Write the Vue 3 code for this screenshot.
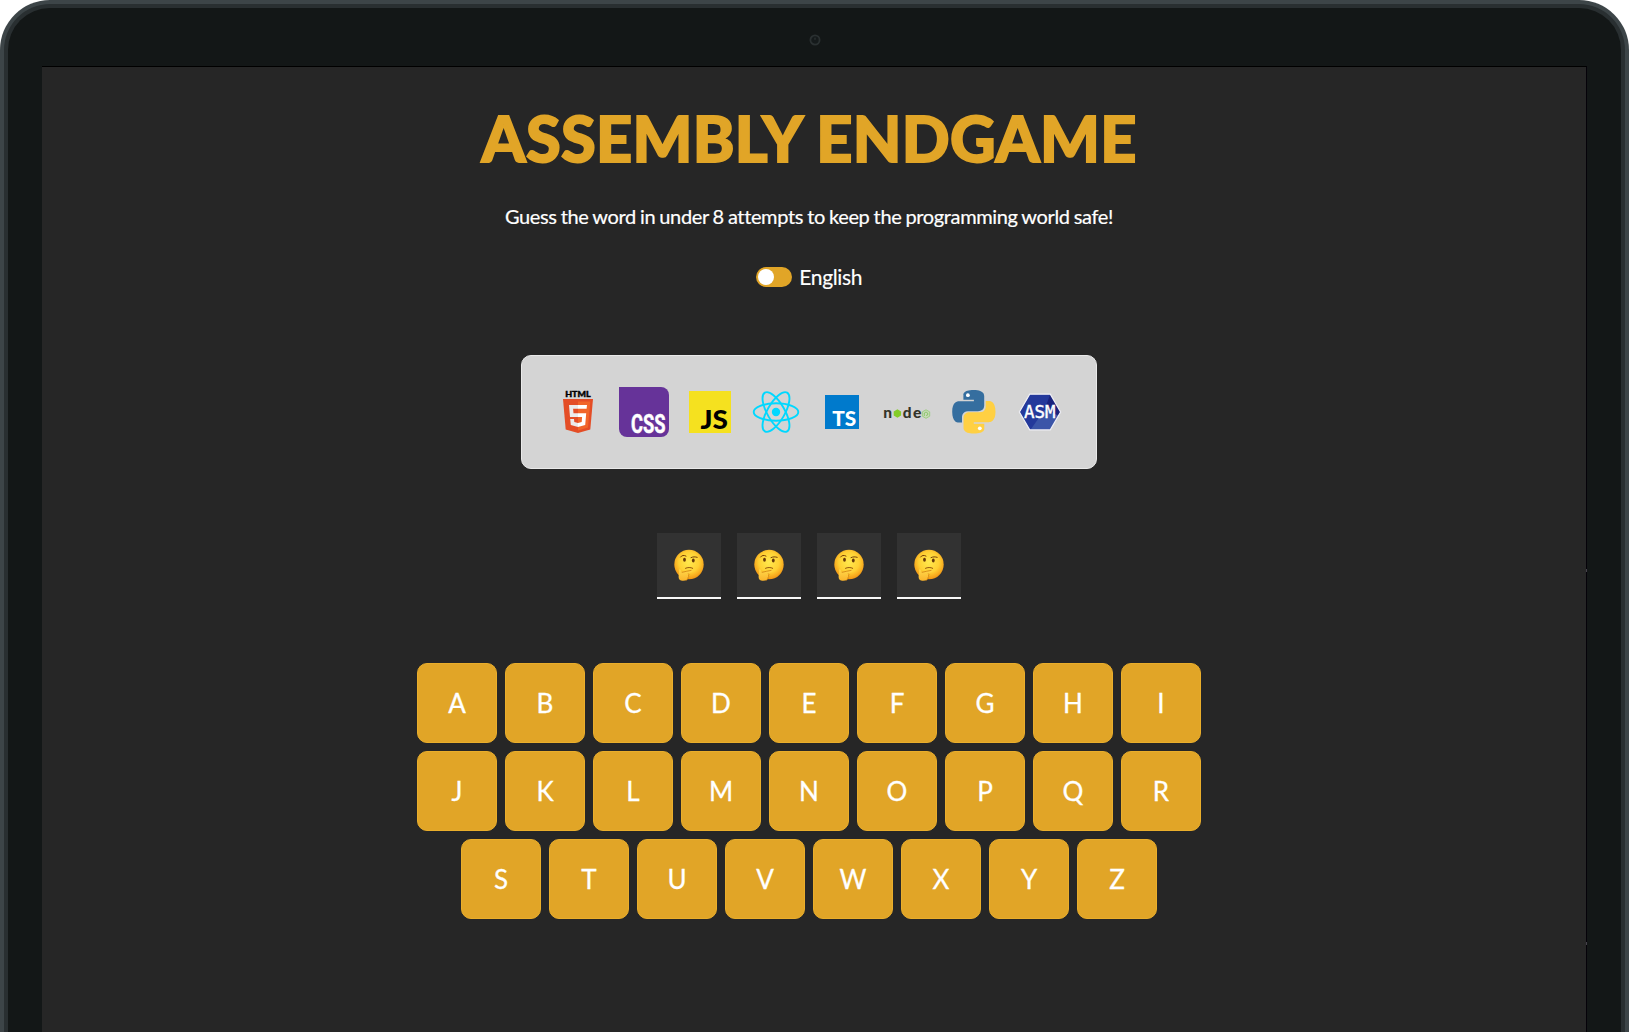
<script setup>
const rows = ['ABCDEFGHI', 'JKLMNOPQR', 'STUVWXYZ'].map((r) => r.split(''))
const wordLength = 4
</script>

<template>
  <div class="lid">
    <div class="rim">
      <div class="bezel">
        <div class="camera-bar">
          <svg class="camera" width="14" height="14" viewBox="0 0 14 14">
            <circle cx="7" cy="7" r="4.6" fill="#151a1b" stroke="#2a3031" stroke-width="1.8" />
            <path d="M7 4.6v2.2" stroke="#343a3b" stroke-width="1" />
          </svg>
        </div>
        <div class="screen">
          <i class="notch notch-a"></i>
          <i class="notch notch-b"></i>
          <main class="game">
            <h1>ASSEMBLY ENDGAME</h1>
            <p class="intro">Guess the word in under 8 attempts to keep the programming world safe!</p>
            <div class="language">
              <span class="switch"><span class="knob"></span></span>
              <span class="lang-name">English</span>
            </div>

            <section class="stack">
              <svg viewBox="0 0 50 50">
                <text x="12.2" y="9.7" class="heavy" font-size="8.1" textLength="25.4" lengthAdjust="spacingAndGlyphs" stroke="#000" stroke-width=".4">HTML</text>
                <path d="M10 12h30l-2.700 30.600L25 46l-12.300-3.400z" fill="#e44d26" />
                <path d="M25 14.500h12.300L35 40.600l-10 2.800z" fill="#f16529" />
                <path d="M16 18h9v3.800h-4.900l.4 4.400H25V30h-8zM17.200 32h3.800l.3 3 3.700 1v4l-7.200-2z" fill="#ebebeb" />
                <path d="M25 18h9l-.4 3.800H25zM25 26.200h8.200l-1 11.800-7.200 2v-4l3.700-1 .4-5H25z" fill="#fff" />
              </svg>
              <svg viewBox="0 0 50 50">
                <path d="M0 0h42a8 8 0 0 1 8 8v34a8 8 0 0 1-8 8H8a8 8 0 0 1-8-8z" fill="#663399" />
                <text x="12" y="45.700" class="cond" font-size="25" textLength="34.500" lengthAdjust="spacingAndGlyphs" fill="#fff" stroke="#fff" stroke-width=".5">CSS</text>
              </svg>
              <svg viewBox="0 0 50 50">
                <path d="M4 4h42v42H4z" fill="#f5e11f" />
                <text x="15.500" y="42.400" class="heavy" font-size="26.500" textLength="27.500" lengthAdjust="spacingAndGlyphs">JS</text>
              </svg>
              <svg viewBox="0 0 50 50">
                <circle cx="25" cy="25" r="4.2" fill="#00d8ff" />
                <g fill="none" stroke="#00d8ff" stroke-width="1.900">
                  <ellipse cx="25" cy="25" rx="22.300" ry="8.700" />
                  <ellipse cx="25" cy="25" rx="22.300" ry="8.700" transform="rotate(60 25 25)" />
                  <ellipse cx="25" cy="25" rx="22.300" ry="8.700" transform="rotate(120 25 25)" />
                </g>
              </svg>
              <svg viewBox="0 0 50 50">
                <path d="M8 8h34v34H8z" fill="#007acc" />
                <text x="15.300" y="38.900" class="heavy" font-size="21.500" textLength="24" lengthAdjust="spacingAndGlyphs" fill="#fff">TS</text>
              </svg>
              <svg viewBox="0 0 50 50">
                <g class="heavy" font-size="15.500" fill="#333329">
                  <text x="0.300" y="31" textLength="8.800" lengthAdjust="spacingAndGlyphs">n</text>
                  <text x="19.800" y="31" textLength="8.800" lengthAdjust="spacingAndGlyphs">d</text>
                  <text x="29.900" y="31" textLength="8.400" lengthAdjust="spacingAndGlyphs">e</text>
                </g>
                <path d="m14.400 22.300 3.700 2.100v4.200l-3.700 2.100-3.700-2.100v-4.200z" fill="#83cd29" />
                <path d="m43 22.800 3.700 2.100v4.300L43 31.300l-3.700-2.100v-4.300z" fill="#c9dbb9" stroke="#8fcb70" stroke-width=".8" />
                <path d="M41.300 29v-3l1.700-1 1.700 1v2l-1.700.5" fill="none" stroke="#7cc05a" stroke-width=".8" />
              </svg>
              <svg viewBox="0 0 50 50">
                <g transform="translate(3.200 3)">
                  <path d="M21.500 0C10.500 0 11.200 4.800 11.200 4.800v5h10.500v1.500H7S0 10.500 0 21.700s6.100 10.800 6.100 10.800h3.700v-5.200s-.2-6.100 6-6.100h10.400s5.800.1 5.800-5.600V6.100S32.900 0 21.500 0z" fill="#356e9f" />
                  <path d="M21.800 43.500c11 0 10.300-4.800 10.300-4.800v-5H21.600v-1.500h14.700s7 .8 7-10.400-6.100-10.800-6.100-10.800h-3.700v5.200s.2 6.100-6 6.100H17.100s-5.800-.1-5.800 5.600v9.500s-.9 6.100 10.500 6.100z" fill="#ffd043" />
                  <circle cx="15.700" cy="5.200" r="1.900" fill="#fff" />
                  <circle cx="27.600" cy="38.300" r="1.900" fill="#fff" />
                </g>
              </svg>
              <svg viewBox="0 0 50 50">
                <path d="M14.700 7.200h20.600L45.600 25 35.300 42.800H14.700L4.400 25z" fill="#24399b" />
                <path d="M35.300 7.200 45.600 25l-2.200 3.600-14-5.600z" fill="#1a237e" />
                <path d="M29.400 23 43.400 28.600l-8.100 14.200H15.500z" fill="#3b55a8" />
                <path d="M14.700 7.200h20.600L45.600 25 35.300 42.800H14.700L4.400 25z" fill="none" stroke="#f0f0f5" stroke-width="1.200" />
                <text x="9" y="31.200" class="mono" font-size="17.300" textLength="31.500" lengthAdjust="spacingAndGlyphs" fill="#fff" stroke="#fff" stroke-width=".4">ASM</text>
              </svg>
            </section>

            <section class="word">
              <div v-for="n in wordLength" :key="n" class="slot">
                <svg viewBox="0 0 32 32" width="32" height="32">
                  <defs>
                    <radialGradient :id="'face' + n" cx=".5" cy=".42" r=".56">
                      <stop offset="0" stop-color="#ffe94e" />
                      <stop offset=".62" stop-color="#ffd033" />
                      <stop offset="1" stop-color="#f39a16" />
                    </radialGradient>
                    <linearGradient :id="'hand' + n" x1="0" y1="0" x2="0" y2="1">
                      <stop offset="0" stop-color="#ffd84a" />
                      <stop offset="1" stop-color="#fbb42c" />
                    </linearGradient>
                  </defs>
                  <circle cx="16" cy="15.500" r="14.700" :fill="'url(#face' + n + ')'" />
                  <ellipse cx="11.500" cy="10.800" rx="1.400" ry="2" fill="#66370a" />
                  <ellipse cx="20.300" cy="11.400" rx="1.400" ry="2" fill="#66370a" />
                  <path d="M7.600 8c1-1.800 3.500-2.100 5.400-.9M18 8.600c1.900-1 4.200-.9 6.200-.3" fill="none" stroke="#774107" stroke-width="1" stroke-linecap="round" />
                  <path d="M12.500 19.300c2.200-1 5-1.200 7.200 0" fill="none" stroke="#874708" stroke-width=".9" stroke-linecap="round" />
                  <path d="M6.200 20.400c.9-.4 1.600.3 1.800 1.300l.6 1.500c3.200-.4 6.400-1.600 10-1.900 1.300 0 1.400 1.300.2 1.800l-3.600 1.400c.8.700.8 1.400.3 2 .4.800.1 1.500-.4 2-.1 2.200-1.700 3.300-4.800 3.300-3.200 0-4.700-1.100-4.700-4.300z" :fill="'url(#hand' + n + ')'" />
                  <path d="M8.800 23.400c3.200-.5 6.300-1.800 9.700-2.100M15.200 24.500c.8.700.8 1.400.3 2 .4.800.1 1.500-.4 2-.1 1.500-.8 2.500-2.200 3" fill="none" stroke="#c9740b" stroke-width=".7" />
                </svg>
              </div>
            </section>

            <section class="keyboard">
              <div v-for="(row, i) in rows" :key="i" class="key-row">
                <button v-for="k in row" :key="k" type="button">{{ k }}</button>
              </div>
            </section>
          </main>
        </div>
      </div>
    </div>
  </div>
</template>

<style>
body {
  background: #fff;
  overflow: hidden;
}
</style>

<style scoped>
.lid,
.rim,
.bezel,
.screen,
.game {
  box-sizing: border-box;
}
.lid {
  height: 1032px;
  padding: 4px 4px 0;
  background: #3d4548;
  border-radius: 50px 50px 0 0;
  font-family: Lato, "Liberation Sans", sans-serif;
  color: #fff;
}
.rim {
  height: 100%;
  padding: 4px 4px 0;
  background: #292f31;
  border-radius: 46px 46px 0 0;
}
.bezel {
  display: flex;
  flex-direction: column;
  height: 100%;
  padding: 0 34px;
  background: #131717;
  border-radius: 42px 42px 0 0;
}
.camera-bar {
  display: flex;
  justify-content: center;
  height: 58px;
  padding-top: 24.500px;
  box-sizing: border-box;
  flex: none;
}
.screen {
  position: relative;
  flex: 1;
  border-top: 1px solid #000;
  border-right: 1px solid #050209;
  background: #262626;
}
.notch {
  position: absolute;
  right: -1px;
  width: 1px;
  height: 3px;
  background: #46424c;
}
.notch-a {
  top: 502px;
}
.notch-b {
  top: 875px;
}
.game {
  display: flex;
  flex-direction: column;
  align-items: center;
  padding: 33px 10px 0 0;
}
h1 {
  margin: 0;
  font-size: 63px;
  line-height: 76px;
  font-weight: 900;
  letter-spacing: 0.300px;
  color: #e1a527;
  -webkit-text-stroke: 1.800px #e1a527;
  white-space: nowrap;
}
.intro {
  margin: 28px 0 0;
  font-size: 20px;
  line-height: 24px;
  letter-spacing: -0.360px;
  word-spacing: -0.650px;
  -webkit-text-stroke: 0.200px #fff;
  white-space: nowrap;
}
.language {
  display: flex;
  align-items: center;
  gap: 7.500px;
  margin-top: 37px;
  height: 24px;
}
.switch {
  display: flex;
  align-items: center;
  width: 36px;
  height: 20px;
  padding: 0 2px;
  box-sizing: border-box;
  border-radius: 10px;
  background: #e1a527;
}
.knob {
  width: 16px;
  height: 16px;
  border-radius: 50%;
  background: #fff;
}
.lang-name {
  margin-top: -1px;
  font-size: 21px;
  line-height: 24px;
  letter-spacing: -0.350px;
  -webkit-text-stroke: 0.150px #fff;
}
.stack {
  display: flex;
  align-items: center;
  gap: 16px;
  height: 114px;
  margin-top: 66px;
  padding: 0 31px;
  box-sizing: border-box;
  border: 1px solid #e9e9e9;
  border-radius: 10px;
  background: #d4d4d4;
}
.stack svg {
  width: 50px;
  height: 50px;
  flex: none;
  overflow: visible;
}
.heavy {
  font-family: Lato, sans-serif;
  font-weight: 900;
}
.cond {
  font-family: Roboto, "Open Sans", sans-serif;
  font-weight: 700;
}
.mono {
  font-family: "DejaVu Sans Mono", monospace;
}
.word {
  display: flex;
  gap: 16px;
  margin-top: 64px;
}
.slot {
  display: flex;
  align-items: center;
  justify-content: center;
  width: 64px;
  height: 66px;
  box-sizing: border-box;
  border-bottom: 2px solid #f9f9f9;
  background: #323232;
}
.keyboard {
  display: flex;
  flex-direction: column;
  gap: 8px;
  margin-top: 64px;
}
.key-row {
  display: flex;
  justify-content: center;
  gap: 8px;
}
button {
  width: 80px;
  height: 80px;
  padding: 0 0 1px;
  border: 1px solid #eaae2b;
  border-radius: 10px;
  background: #e1a527;
  color: #fff;
  font: 400 26px/32px Lato, "Liberation Sans", sans-serif;
  -webkit-text-stroke: 0.300px #fff;
}
</style>
